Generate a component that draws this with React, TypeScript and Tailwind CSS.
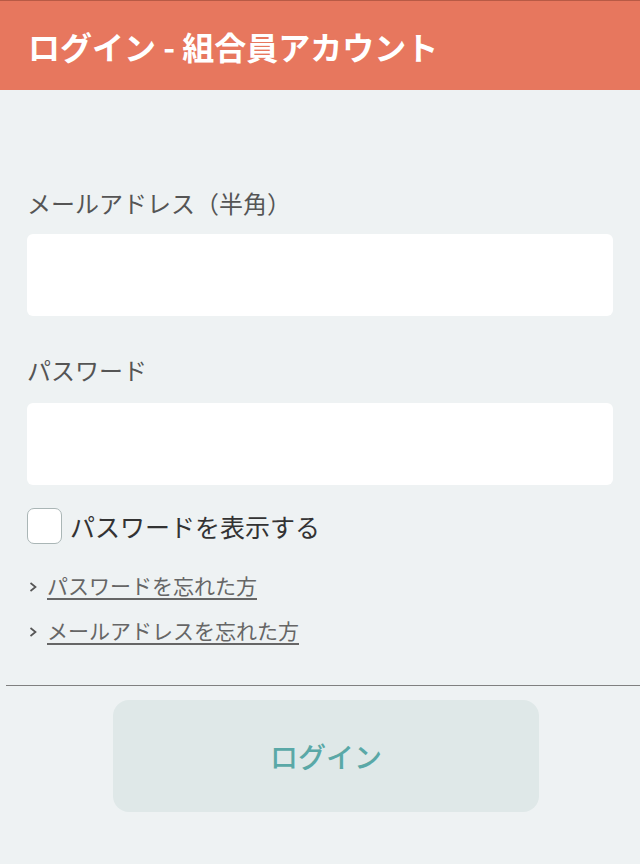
import React from 'react'

const font = { fontFamily: '"Noto Sans CJK JP", "Noto Sans", sans-serif' }

const Chevron = () => (
    <svg width="10" height="14" viewBox="0 0 10 14" className="shrink-0 mt-[3px]">
        <path d="M2.5 3 L7.5 7 L2.5 11" fill="none" stroke="#555" strokeWidth="1.7" />
    </svg>
)

export default function App() {
    return (
        <div className="min-h-[864px] w-[640px] bg-[#eef2f3]" style={font}>
            <header className="h-[90px] bg-[#e7775e] border-t border-[#b85a45] flex items-center px-[28px]">
                <h1 className="text-white font-bold text-[32px] leading-none">
                    ログイン - 組合員アカウント
                </h1>
            </header>

            <main className="px-[27px]">
                <label className="block mt-[95px] text-[24px] leading-[36px] text-[#555]">
                    メールアドレス（半角）
                </label>
                <input className="block mt-[13px] w-[586px] h-[82px] bg-white rounded-[6px] outline-none px-4" />

                <label className="block mt-[36px] text-[24px] leading-[36px] text-[#555]">
                    パスワード
                </label>
                <input type="password" className="block mt-[15px] w-[586px] h-[82px] bg-white rounded-[6px] outline-none px-4" />

                <div className="mt-[23px] flex items-center gap-[8px] h-[36px]">
                    <span className="w-[35px] h-[36px] rounded-[7px] bg-white border-[1.5px] border-[#aab6b6]" />
                    <span className="text-[25px] leading-[36px] text-[#333]">パスワードを表示する</span>
                </div>

                <div className="mt-[25px] flex flex-col gap-[13px]">
                    <a href="#" className="flex items-center gap-[9px] h-[32px] pl-[1px]">
                        <Chevron />
                        <span className="text-[21px] leading-[32px] text-[#666] underline underline-offset-[4px]">パスワードを忘れた方</span>
                    </a>
                    <a href="#" className="flex items-center gap-[9px] h-[32px] pl-[1px]">
                        <Chevron />
                        <span className="text-[21px] leading-[32px] text-[#666] underline underline-offset-[4px]">メールアドレスを忘れた方</span>
                    </a>
                </div>
            </main>

            <hr className="mt-[39px] ml-[6px] border-0 border-t border-[#808080]" />

            <div className="flex justify-center pl-[12px] mt-[14px]">
                <button className="w-[426px] h-[112px] rounded-[16px] bg-[#dfe8e8] text-[#5aa8a7] font-medium text-[28px]">
                    ログイン
                </button>
            </div>
        </div>
    )
}
